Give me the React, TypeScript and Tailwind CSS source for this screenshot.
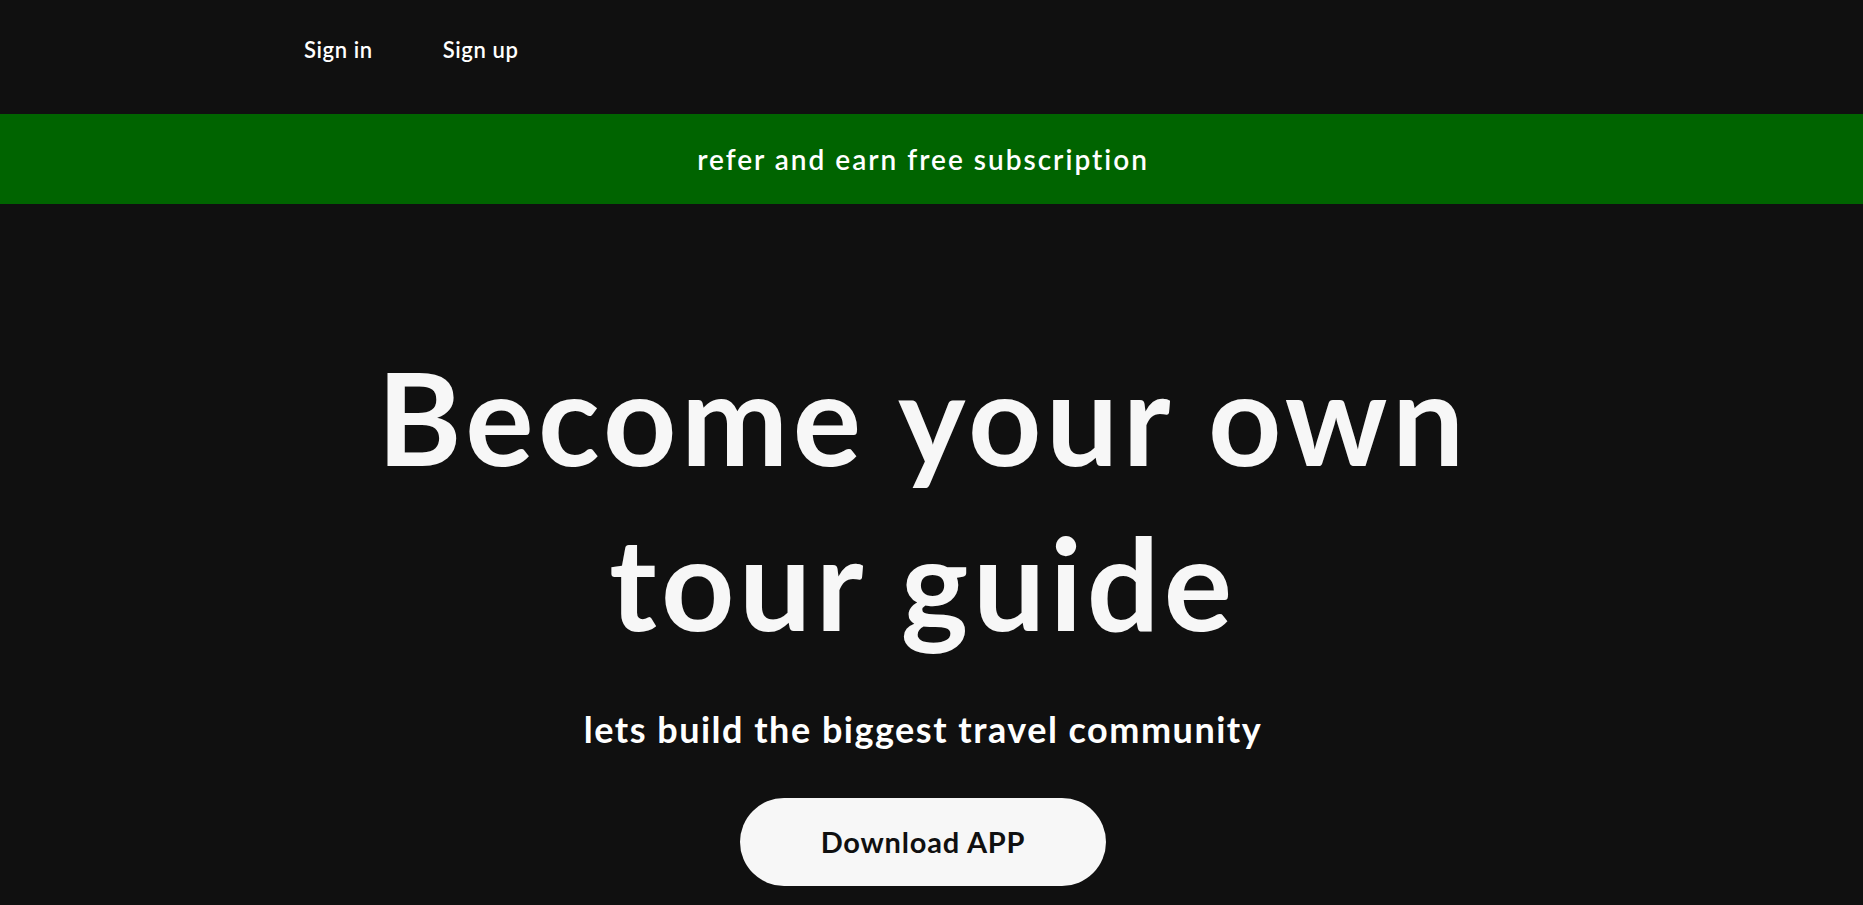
import React from "react";

export default function App() {
  return (
    <div
      className="min-h-screen w-full bg-[#101010] text-[#f7f7f7]"
      style={{ fontFamily: "Lato, 'Noto Sans', sans-serif" }}
    >
      <nav className="flex h-[114px] items-start gap-[70px] pl-[304px] pt-[38px]">
        <a className="text-[22px] font-semibold leading-[24px] tracking-[0.6px] text-white">Sign in</a>
        <a className="text-[22px] font-semibold leading-[24px] tracking-[0.6px] text-white">Sign up</a>
      </nav>
      <div className="flex h-[90px] items-center justify-center bg-[#006400] pr-[17px]">
        <span className="text-[28px] font-semibold tracking-[2px] text-white">refer and earn free subscription</span>
      </div>
      <main className="flex flex-col items-center pr-[17px] pt-[130px]">
        <h1 className="text-center text-[128px] font-bold leading-[165px] tracking-[4.5px]">
          Become your own
          <br />
          tour guide
        </h1>
        <p className="mt-[43px] text-[36px] font-bold leading-[44px] tracking-[1.5px] text-white">
          lets build the biggest travel community
        </p>
        <button className="mt-[47px] flex h-[88px] w-[366px] items-center justify-center rounded-full bg-[#f7f7f7] text-[29px] font-bold tracking-[0.8px] text-[#101010]">
          Download APP
        </button>
      </main>
    </div>
  );
}
